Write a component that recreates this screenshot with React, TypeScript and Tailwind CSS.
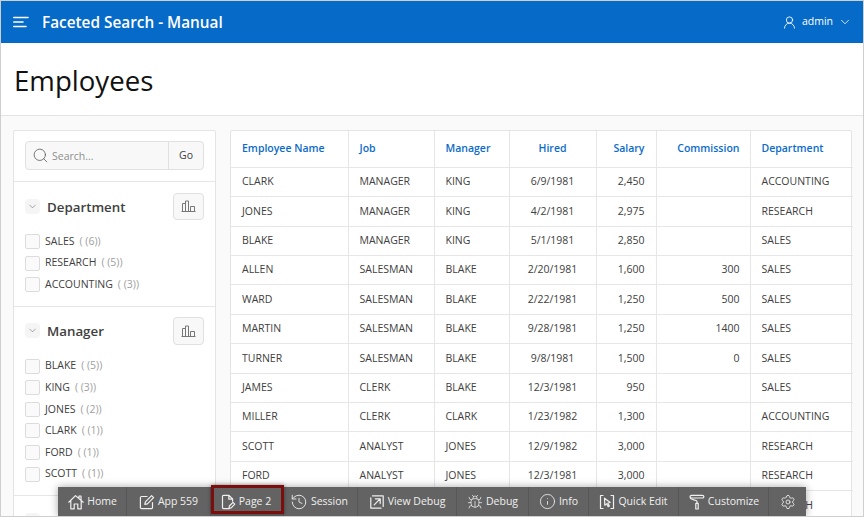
import React from "react";
import { ChevronDown, History, Info, Search, Settings, Bug, UserRound } from "lucide-react";

const rows = [
  ["CLARK", "MANAGER", "KING", "6/9/1981", "2,450", "", "ACCOUNTING"],
  ["JONES", "MANAGER", "KING", "4/2/1981", "2,975", "", "RESEARCH"],
  ["BLAKE", "MANAGER", "KING", "5/1/1981", "2,850", "", "SALES"],
  ["ALLEN", "SALESMAN", "BLAKE", "2/20/1981", "1,600", "300", "SALES"],
  ["WARD", "SALESMAN", "BLAKE", "2/22/1981", "1,250", "500", "SALES"],
  ["MARTIN", "SALESMAN", "BLAKE", "9/28/1981", "1,250", "1400", "SALES"],
  ["TURNER", "SALESMAN", "BLAKE", "9/8/1981", "1,500", "0", "SALES"],
  ["JAMES", "CLERK", "BLAKE", "12/3/1981", "950", "", "SALES"],
  ["MILLER", "CLERK", "CLARK", "1/23/1982", "1,300", "", "ACCOUNTING"],
  ["SCOTT", "ANALYST", "JONES", "12/9/1982", "3,000", "", "RESEARCH"],
  ["FORD", "ANALYST", "JONES", "12/3/1981", "3,000", "", "RESEARCH"],
  ["SMITH", "CLERK", "FORD", "12/17/1980", "800", "", "RESEARCH"],
];

const heads = ["Employee Name", "Job", "Manager", "Hired", "Salary", "Commission", "Department"];
const widths = ["w-[117px]", "w-[86px]", "w-[75px]", "w-[87px]", "w-[60px]", "w-[94px]", "w-[103px]"];
const aligns = [
  "text-left px-[11px]",
  "text-left px-[11px]",
  "text-left px-[11px]",
  "text-center px-[11px]",
  "text-right pl-[11px] pr-[11px]",
  "text-right pl-[11px] pr-[10px]",
  "text-left pl-[11px] pr-[10px]",
];

const BarsIcon = () => (
  <svg width="15" height="12" viewBox="0 0 15 12" fill="none" stroke="#777" strokeWidth="1">
    <path d="M1.5 11V3.5H4.5V11M4.5 11V1H7.5V11M7.5 11V1M7.5 11H7.5M9.5 11V6.5H13.5V11M0.5 11.5H14.5" />
  </svg>
);

const Toggle = () => (
  <span className="w-[15px] h-[15px] bg-[#f5f5f5] flex items-center justify-center rounded-sm">
    <ChevronDown size={11} strokeWidth={1.25} color="#666" />
  </span>
);

const Facet = ({ title, items }: { title: string; items: [string, number][] }) => (
  <div className="px-[11px] pt-[10.5px] pb-[13.5px] border-b border-[#e6e6e6]">
    <div className="flex items-center justify-between h-[27.5px]">
      <div className="flex items-center">
        <Toggle />
        <span className="ml-[7px] mt-[3px] text-[13.3px] font-semibold text-[#404040]">{title}</span>
      </div>
      <span className="w-[31px] h-[27.5px] bg-[#f8f8f8] border border-[#e0e0e0] rounded-sm flex items-center justify-center">
        <BarsIcon />
      </span>
    </div>
    <div className="mt-[14px] flex flex-col gap-[6.6px]">
      {items.map(([name, n]) => (
        <div key={name} className="flex items-center h-[15px]">
          <span className="w-[15px] h-[15px] bg-[#fafafa] border border-[#dcdcdc] rounded-[2px]" />
          <span className="ml-[5px] text-[10.5px] text-[#404040]">{name}</span>
          <span className="ml-[5px] text-[10.5px] text-[#a0a0a0]">( ({n}))</span>
        </div>
      ))}
    </div>
  </div>
);

const svgProps = { width: 16, height: 16, viewBox: "0 0 16 16", fill: "none", stroke: "currentColor", strokeWidth: 1.2, strokeLinejoin: "round" as const, strokeLinecap: "round" as const };

const HomeIcon = () => (
  <svg {...svgProps}>
    <path d="M0.8 8.2L7.5 1.6L15.2 8.2M2.8 7V14.8H6.2V10H9.8V14.8H13.2V7M11 2V4.4M11 2H13V6" />
  </svg>
);
const AppIcon = () => (
  <svg {...svgProps}>
    <path d="M13.5 8.5V13.5C13.5 14.2 13 14.6 12.4 14.6H2.6C2 14.6 1.4 14.2 1.4 13.5V3.6C1.4 3 2 2.5 2.6 2.5H8" />
    <path d="M5.8 10.4L6.4 7.8L12.6 1.6L14.6 3.6L8.4 9.8Z" />
  </svg>
);
const PageIcon = () => (
  <svg {...svgProps}>
    <path d="M9.5 14.6H3.5C2.9 14.6 2.5 14.2 2.5 13.6V2.4C2.5 1.8 2.9 1.4 3.5 1.4H9L12.6 5V7.2M8.8 1.6V5.2H12.4" />
    <path d="M9 14.2L9.4 12L13 8.4L14.8 10.2L11.2 13.8Z" />
  </svg>
);
const ViewIcon = () => (
  <svg {...svgProps}>
    <path d="M3.5 1.8H14.2V12.5M12 14.2H1.8V3.8" />
    <path d="M5.2 10.8L10.8 5.2M6.4 4.8H11.2V9.6" />
  </svg>
);
const QuickEditIcon = () => (
  <svg {...svgProps}>
    <path d="M4 1.5H1.5V14.5H4M12 1.5H14.5V14.5H12" />
    <path d="M5.5 4.2L11.2 8.4L8.8 9L10.4 12L9.2 12.6L7.6 9.8L5.8 11.2Z" />
  </svg>
);
const RollerIcon = () => (
  <svg {...svgProps}>
    <path d="M2.6 1.4H13.4C14.3 1.4 14.9 2 14.9 2.7C14.9 3.4 14.3 4 13.4 4H2.6C1.7 4 1.1 3.4 1.1 2.7C1.1 2 1.7 1.4 2.6 1.4Z" />
    <path d="M1.3 3.8C1.4 6.4 8 5.2 8 7.6V9.4" />
    <path d="M6.8 9.4H9.2V15H6.8Z" />
  </svg>
);
const SessionIcon = () => <History size={18} strokeWidth={1.2} />;
const DebugIcon = () => <Bug size={16} strokeWidth={1.1} />;
const InfoIcon = () => <Info size={17} strokeWidth={1.2} />;

const tools = [
  { label: "Home", icon: HomeIcon, w: "w-[69px] pl-[1px]" },
  { label: "App 559", icon: AppIcon, w: "w-[84px]" },
  { label: "Page 2", icon: PageIcon, w: "w-[73px] pr-[3px]" },
  { label: "Session", icon: SessionIcon, w: "w-[74px] pr-[3px]" },
  { label: "View Debug", icon: ViewIcon, w: "w-[99px]" },
  { label: "Debug", icon: DebugIcon, w: "w-[72px]" },
  { label: "Info", icon: InfoIcon, w: "w-[60px]" },
  { label: "Quick Edit", icon: QuickEditIcon, w: "w-[90px]" },
  { label: "Customize", icon: RollerIcon, w: "w-[90px] pl-[1px]" },
];

export default function App() {
  return (
    <div className="relative w-[864px] h-[517px] overflow-hidden bg-[#fafafa] border border-[#cfcfcf] font-['Open_Sans',sans-serif]">
      <header className="h-[42px] bg-[#066ac8] flex items-center justify-between pl-[12px] pr-[11px] text-white">
        <div className="flex items-center">
          <svg width="16" height="12" viewBox="0 0 16 12" stroke="white" strokeWidth="1.6" strokeLinecap="round">
            <path d="M0.8 1.5H15M0.8 6H10M0.8 10.5H13" />
          </svg>
          <span className="ml-[13px] mt-[2px] text-[15.35px] font-semibold">Faceted Search - Manual</span>
        </div>
        <div className="flex items-center text-[10.5px]">
          <UserRound size={15} strokeWidth={1.4} />
          <span className="ml-[5px]">admin</span>
          <ChevronDown size={14} strokeWidth={1.4} className="ml-[5px]" />
        </div>
      </header>

      <div className="h-[73px] bg-white border-b border-[#e4e4e4] flex items-center pl-[13px] pt-[3px]">
        <h1 className="text-[27.6px] text-[#111]">Employees</h1>
      </div>

      <main className="flex pt-[14px] pl-[12px] gap-[14px]">
        <aside className="w-[203px] shrink-0 bg-white border border-[#e4e4e4] rounded-t-[2px]">
          <div className="px-[11px] pt-[10px] pb-[11px] border-b border-[#e6e6e6]">
            <div className="flex h-[29px] border border-[#e0e0e0] rounded-sm bg-[#f8f8f8]">
              <div className="flex-1 flex items-center pl-[6px] border-r border-[#e0e0e0]">
                <Search size={17} strokeWidth={1.1} color="#555" />
                <span className="ml-[3px] pt-[2px] text-[10.5px] text-[#8f8f8f]">Search...</span>
              </div>
              <div className="w-[34px] flex items-center justify-center text-[10.5px] text-[#404040]">Go</div>
            </div>
          </div>
          <Facet title="Department" items={[["SALES", 6], ["RESEARCH", 5], ["ACCOUNTING", 3]]} />
          <Facet title="Manager" items={[["BLAKE", 5], ["KING", 3], ["JONES", 2], ["CLARK", 1], ["FORD", 1], ["SCOTT", 1]]} />
          <div className="px-[11px] pt-[17px]">
            <Toggle />
          </div>
        </aside>

        <section className="w-[622px] shrink-0 bg-white border border-[#e4e4e4] rounded-t-[2px]">
          <table className="w-full table-fixed border-collapse">
            <thead>
              <tr className="h-[36.4px]">
                {heads.map((h, i) => (
                  <th key={h} className={`${widths[i]} ${aligns[i]} text-[10.5px] font-semibold text-[#0b6bc9] border-b border-[#e6e6e6] ${i > 0 ? "border-l" : ""} border-l-[#e6e6e6]`}>
                    {h}
                  </th>
                ))}
              </tr>
            </thead>
            <tbody>
              {rows.map((r) => (
                <tr key={r[0]} className="h-[29.4px]">
                  {r.map((c, i) => (
                    <td key={i} className={`${aligns[i]} text-[10.5px] text-[#404040] border-b border-[#e6e6e6] ${i > 0 ? "border-l" : ""} border-l-[#e6e6e6]`}>
                      {c}
                    </td>
                  ))}
                </tr>
              ))}
            </tbody>
          </table>
        </section>
      </main>

      <div className="absolute left-[57px] top-[486px] h-[29px] flex bg-[#636363] text-[#f0f0f0] text-[10.5px] shadow-[0_0_8px_rgba(0,0,0,0.35)]">
        {tools.map(({ label, icon: Icon, w }) => (
          <div key={label} className={`${w} flex items-center justify-center gap-[3px] border-r border-[#575757]`}>
            <Icon />
            <span>{label}</span>
          </div>
        ))}
        <div className="w-[37px] flex items-center justify-center">
          <Settings size={16} strokeWidth={1.3} />
        </div>
        <div className="absolute left-[153px] -top-[2px] w-[73px] h-[29px] border-[3px] border-[#7b0d0d] shadow-[0_0_4px_rgba(0,0,0,0.4)]" />
      </div>
    </div>
  );
}
